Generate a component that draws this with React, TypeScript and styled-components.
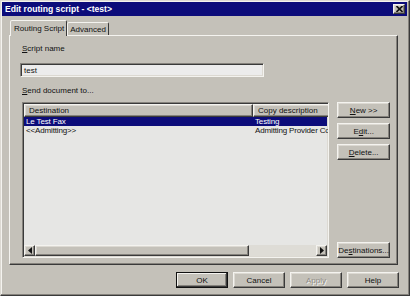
import React from "react";
import styled, { createGlobalStyle, css } from "styled-components";

const GlobalStyle = createGlobalStyle`
  html, body {
    margin: 0;
    padding: 0;
    background: #c4c1b9;
  }
  * {
    box-sizing: border-box;
  }
`;

const colors = {
  face: "#c4c1b9",
  light: "#f4f3ef",
  midLight: "#dcd9d2",
  shadow: "#85827c",
  dark: "#3a3a3a",
  navy: "#0c0c7a",
  field: "#ececec",
  list: "#e6e6e4",
};

const raised = css`
  border: 1px solid;
  border-color: ${colors.light} ${colors.dark} ${colors.dark} ${colors.light};
  box-shadow: inset -1px -1px ${colors.shadow}, inset 1px 1px ${colors.midLight};
`;

const sunken = css`
  border: 1px solid;
  border-color: ${colors.shadow} ${colors.light} ${colors.light} ${colors.shadow};
  box-shadow: inset 1px 1px ${colors.dark}, inset -1px -1px ${colors.midLight};
`;

const Window = styled.div`
  width: 410px;
  height: 296px;
  background: ${colors.face};
  border: 1px solid;
  border-color: ${colors.midLight} ${colors.dark} ${colors.dark} ${colors.midLight};
  box-shadow: inset -1px -1px ${colors.shadow}, inset 1px 1px ${colors.light};
  padding: 1px 2px 2px 1px;
  display: flex;
  flex-direction: column;
  font-family: "Liberation Sans", Arial, sans-serif;
  font-size: 8px;
  color: #111;
`;

const TitleBar = styled.div`
  height: 14px;
  background: ${colors.navy};
  display: flex;
  align-items: center;
  justify-content: space-between;
  padding: 0 2px 0 3px;
`;

const Title = styled.span`
  color: #fff;
  font-weight: bold;
  font-size: 8.6px;
`;

const CloseButton = styled.div`
  ${raised};
  width: 12px;
  height: 10px;
  background: ${colors.face};
  display: flex;
  align-items: center;
  justify-content: center;
`;

const Body = styled.div`
  flex: 1;
  display: flex;
  flex-direction: column;
  padding: 4px 9px 0 7px;
`;

const TabStrip = styled.div`
  display: flex;
  align-items: flex-end;
  height: 15px;
  padding-left: 1px;
  position: relative;
  z-index: 1;
`;

const Tab = styled.div<{ $active?: boolean }>`
  background: ${colors.face};
  border: 1px solid;
  border-bottom: none;
  border-color: ${colors.light} ${colors.dark} transparent ${colors.light};
  border-radius: 2px 2px 0 0;
  display: flex;
  align-items: center;
  white-space: nowrap;
  ${({ $active }) =>
    $active
      ? css`
          height: 16px;
          margin-bottom: -1px;
          padding: 0 2px 0 3px;
        `
      : css`
          height: 13px;
          padding: 0 2px;
        `}
`;

const Panel = styled.div`
  height: 230px;
  border: 1px solid;
  border-color: ${colors.light} ${colors.dark} ${colors.dark} ${colors.light};
  box-shadow: inset -1px -1px ${colors.shadow};
  padding: 8px 7px 6px 12px;
  display: flex;
  flex-direction: column;
`;

const Label = styled.div`
  line-height: 10px;
  height: 10px;
  u {
    text-decoration-thickness: 1px;
    text-underline-offset: 1px;
  }
`;

const TextInput = styled.div`
  ${sunken};
  width: 244px;
  height: 14px;
  margin: 9px 0 9px -2px;
  background: ${colors.field};
  padding: 0 3px;
  display: flex;
  align-items: center;
`;

const ListRow = styled.div`
  display: flex;
  gap: 8px;
  margin-top: 6px;
  flex: 1;
`;

const ListView = styled.div`
  ${sunken};
  width: 310px;
  background: ${colors.list};
  display: flex;
  flex-direction: column;
  padding: 1px;
  overflow: hidden;
`;

const HeaderRow = styled.div`
  display: flex;
  height: 13px;
  flex-shrink: 0;
`;

const HeaderCell = styled.div<{ $width: number }>`
  ${raised};
  width: ${({ $width }) => $width}px;
  flex-shrink: 0;
  background: ${colors.face};
  padding: 0 4px;
  display: flex;
  align-items: center;
  white-space: nowrap;
`;

const Rows = styled.div`
  flex: 1;
`;

const Row = styled.div<{ $selected?: boolean }>`
  display: flex;
  height: 9px;
  line-height: 9px;
  white-space: nowrap;
  background: ${({ $selected }) => ($selected ? colors.navy : "transparent")};
  color: ${({ $selected }) => ($selected ? "#fff" : "#111")};
`;

const Cell = styled.div<{ $width: number }>`
  width: ${({ $width }) => $width}px;
  flex-shrink: 0;
  padding: 0 2px;
  overflow: hidden;
  letter-spacing: -0.15px;
`;

const ScrollBar = styled.div`
  display: flex;
  height: 11px;
  flex-shrink: 0;
  background: #dedcd6;
`;

const ArrowButton = styled.div`
  ${raised};
  width: 11px;
  height: 11px;
  background: ${colors.face};
  display: flex;
  align-items: center;
  justify-content: center;
  flex-shrink: 0;
`;

const Thumb = styled.div<{ $width: number }>`
  ${raised};
  width: ${({ $width }) => $width}px;
  background: ${colors.face};
`;

const Track = styled.div`
  flex: 1;
`;

const SideButtons = styled.div`
  display: flex;
  flex-direction: column;
  gap: 5px;
  width: 53px;
`;

const Button = styled.div<{ $default?: boolean; $disabled?: boolean }>`
  ${raised};
  height: 16px;
  flex-shrink: 0;
  background: ${colors.face};
  display: flex;
  align-items: center;
  justify-content: center;
  white-space: nowrap;
  color: ${({ $disabled }) => ($disabled ? "#8e8b85" : "#111")};
  text-shadow: ${({ $disabled }) => ($disabled ? `1px 1px ${colors.light}` : "none")};
  u {
    text-decoration-thickness: 1px;
    text-underline-offset: 1px;
  }
  ${({ $default }) =>
    $default &&
    css`
      border: 1px solid #111;
      box-shadow: inset -1px -1px ${colors.dark}, inset 1px 1px ${colors.light},
        inset -2px -2px ${colors.shadow};
    `}
`;

const PushDown = styled.div`
  margin-top: auto;
`;

const Footer = styled.div`
  display: flex;
  justify-content: flex-end;
  gap: 5px;
  margin-top: 7px;
  margin-right: -1px;
`;

const FooterButton = styled(Button)`
  width: 52px;
`;

const ArrowLeft = () => (
  <svg width="4" height="7" viewBox="0 0 4 7">
    <path d="M4 0 L0 3.5 L4 7 Z" fill="#111" />
  </svg>
);

const ArrowRight = () => (
  <svg width="4" height="7" viewBox="0 0 4 7">
    <path d="M0 0 L4 3.5 L0 7 Z" fill="#111" />
  </svg>
);

const CloseGlyph = () => (
  <svg width="7" height="6" viewBox="0 0 7 6">
    <path d="M0.5 0 L6.5 6 M6.5 0 L0.5 6" stroke="#111" strokeWidth="1.6" />
  </svg>
);

const destinations = [
  { id: "1", name: "Le Test Fax", copy: "Testing", selected: true },
  { id: "2", name: "<<Admitting>>", copy: "Admitting Provider Copy", selected: false },
];

const App = () => {
  return (
    <>
      <GlobalStyle />
      <Window>
        <TitleBar>
          <Title>Edit routing script - &lt;test&gt;</Title>
          <CloseButton>
            <CloseGlyph />
          </CloseButton>
        </TitleBar>
        <Body>
          <TabStrip>
            <Tab $active>Routing Script</Tab>
            <Tab>Advanced</Tab>
          </TabStrip>
          <Panel>
            <Label>
              <u>S</u>cript name
            </Label>
            <TextInput>test</TextInput>
            <Label>
              <u>S</u>end document to...
            </Label>
            <ListRow>
              <ListView>
                <HeaderRow>
                  <HeaderCell $width={229}>Destination</HeaderCell>
                  <HeaderCell $width={92}>Copy description</HeaderCell>
                </HeaderRow>
                <Rows>
                  {destinations.map((d) => (
                    <Row key={d.id} $selected={d.selected}>
                      <Cell $width={229}>{d.name}</Cell>
                      <Cell $width={92}>{d.copy}</Cell>
                    </Row>
                  ))}
                </Rows>
                <ScrollBar>
                  <ArrowButton>
                    <ArrowLeft />
                  </ArrowButton>
                  <Thumb $width={214} />
                  <Track />
                  <ArrowButton>
                    <ArrowRight />
                  </ArrowButton>
                </ScrollBar>
              </ListView>
              <SideButtons>
                <Button>
                  <u>N</u>ew &gt;&gt;
                </Button>
                <Button>
                  E<u>d</u>it...
                </Button>
                <Button>
                  <u>D</u>elete...
                </Button>
                <PushDown />
                <Button>
                  De<u>s</u>tinations...
                </Button>
              </SideButtons>
            </ListRow>
          </Panel>
          <Footer>
            <FooterButton $default>OK</FooterButton>
            <FooterButton>Cancel</FooterButton>
            <FooterButton $disabled>Apply</FooterButton>
            <FooterButton>Help</FooterButton>
          </Footer>
        </Body>
      </Window>
    </>
  );
};

export default App;
